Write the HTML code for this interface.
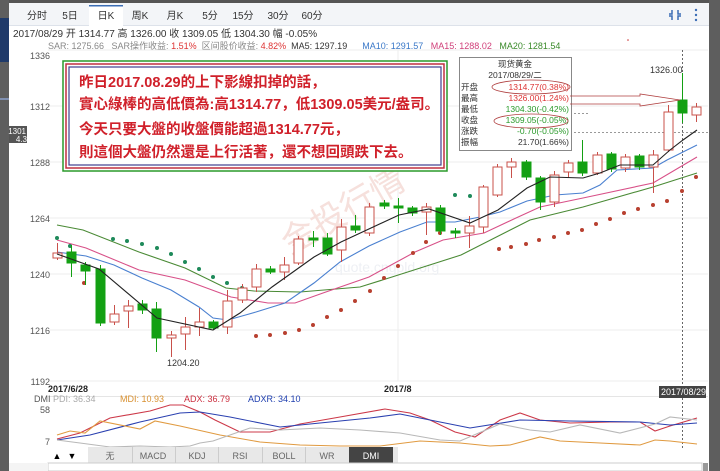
<!DOCTYPE html>
<html><head><meta charset="utf-8"><style>
html,body{margin:0;padding:0;width:720px;height:471px;overflow:hidden;background:#fff;font-family:"Liberation Sans","Noto Sans CJK SC",sans-serif}
svg{display:block}
</style></head><body>
<svg id="s" width="720" height="471" xmlns="http://www.w3.org/2000/svg" font-family="Liberation Sans, Noto Sans CJK SC, sans-serif">
<!-- dimmed background -->
<rect x="0" y="0" width="720" height="471" fill="#5e5e5e"/>
<rect x="0" y="18" width="9" height="44" fill="#1f3a6a"/>
<rect x="0" y="98" width="9" height="2" fill="#8090b0"/>
<rect x="9" y="0" width="700" height="471" fill="#fff"/>
<rect x="9" y="0" width="700" height="3" fill="#555"/>
<!-- tab bar -->
<rect x="9" y="3" width="700" height="23" fill="#f3f5f8"/>
<line x1="9" y1="25.5" x2="709" y2="25.5" stroke="#dde2ea"/>
<rect x="89" y="5" width="34" height="21" fill="#fff"/>
<rect x="89" y="5" width="34" height="1.5" fill="#3b6db5"/>
<g font-size="10" fill="#333" text-anchor="middle">
<text x="37" y="19">分时</text><text x="70" y="19">5日</text><text x="106" y="19">日K</text><text x="140" y="19">周K</text><text x="175" y="19">月K</text><text x="210" y="19">5分</text><text x="243" y="19">15分</text><text x="278" y="19">30分</text><text x="312" y="19">60分</text>
</g>
<g stroke="#3b6db5" stroke-width="1.5" fill="none"><path d="M672 10v4h-3M678 10v4h3M672 20v-4h-3M678 20v-4h3"/></g>
<g fill="#3b6db5"><circle cx="696" cy="10" r="1.2"/><circle cx="696" cy="15" r="1.2"/><circle cx="696" cy="20" r="1.2"/></g>
<text x="13" y="37" font-size="10" fill="#333">2017/08/29 开 1314.77 高 1326.00 收 1309.05 低 1304.30 幅 -0.05%</text>
<text x="48" y="49" font-size="9" fill="#888">SAR: 1275.66 &#160; SAR操作收益: <tspan fill="#d33">1.51%</tspan> &#160;区间股价收益: <tspan fill="#d33">4.82%</tspan> &#160;<tspan fill="#333">MA5: 1297.19</tspan> &#160; &#160; &#160;<tspan fill="#3a78c8">MA10: 1291.57</tspan> &#160; <tspan fill="#d0407a">MA15: 1288.02</tspan> &#160; <tspan fill="#3a8a2a">MA20: 1281.54</tspan></text>
<!-- grid -->
<g stroke="#eee"><line x1="48" y1="50" x2="708" y2="50"/><line x1="48" y1="106" x2="708" y2="106"/><line x1="48" y1="162" x2="708" y2="162"/><line x1="48" y1="218" x2="708" y2="218"/><line x1="48" y1="274" x2="708" y2="274"/><line x1="48" y1="330" x2="708" y2="330"/><line x1="48" y1="381" x2="708" y2="381"/><line x1="398" y1="50" x2="398" y2="381"/></g>
<g font-size="9" fill="#555" text-anchor="end"><text x="50" y="59">1336</text><text x="50" y="110">1312</text><text x="50" y="166">1288</text><text x="50" y="222">1264</text><text x="50" y="278">1240</text><text x="50" y="334">1216</text><text x="50" y="385">1192</text></g>
<rect x="9" y="126" width="18" height="17" fill="#555"/>
<text x="26" y="134" font-size="8" fill="#fff" text-anchor="end">1301</text><text x="27" y="142" font-size="8" fill="#fff" text-anchor="end">4.3</text>
<!-- watermark -->
<text x="290" y="255" font-size="34" fill="#f6e0dc" transform="rotate(-30 290 255)">金投行情</text>
<text x="335" y="272" font-size="14" fill="#eef0f4">quote.cngold.org</text>
<line x1="574" y1="132.5" x2="708" y2="132.5" stroke="#999" stroke-dasharray="2,2"/>
<line x1="574" y1="113.5" x2="590" y2="113.5" stroke="#999" stroke-dasharray="2,2"/>
<line x1="682.5" y1="50" x2="682.5" y2="448" stroke="#666" stroke-dasharray="2,2"/>
<circle cx="628" cy="40" r="0.8" fill="#c33"/>
<g id="chart"></g>
<text x="650" y="73" font-size="9" fill="#333">1326.00</text>
<text x="167" y="366" font-size="9" fill="#333">1204.20</text>
<!-- info box -->
<rect x="459.5" y="57.5" width="112" height="93" fill="#fff" stroke="#888"/>
<g font-size="8.5" fill="#333"><text x="515" y="67" text-anchor="middle">现货黄金</text><text x="515" y="78" text-anchor="middle">2017/08/29/二</text>
<text x="461" y="90">开盘</text><text x="461" y="101">最高</text><text x="461" y="112">最低</text><text x="461" y="123">收盘</text><text x="461" y="134">涨跌</text><text x="461" y="145">振幅</text></g>
<g font-size="8.5" text-anchor="end"><text x="569" y="90" fill="#d33">1314.77(0.38%)</text><text x="569" y="101" fill="#d33">1326.00(1.24%)</text><text x="569" y="112" fill="#2a9a2a">1304.30(-0.42%)</text><text x="569" y="123" fill="#2a9a2a">1309.05(-0.05%)</text><text x="569" y="134" fill="#2a9a2a">-0.70(-0.05%)</text><text x="569" y="145" fill="#333">21.70(1.66%)</text></g>
<ellipse cx="531" cy="87" rx="39" ry="7" fill="none" stroke="#b04040" stroke-width="0.8"/>
<ellipse cx="531" cy="121" rx="37" ry="7" fill="none" stroke="#b04040" stroke-width="0.8"/>
<path d="M570 96 L640 96 L640 94 L680 100 L640 106 L640 104 L570 104" fill="none" stroke="#b04040" stroke-width="0.8"/>
<!-- text box -->
<rect x="63" y="61" width="384" height="110" fill="#fff" stroke="#2a9a2a" stroke-width="1.5"/>
<rect x="66" y="64" width="378" height="104" fill="none" stroke="#c03040" stroke-width="1.5"/>
<rect x="69" y="67" width="372" height="98" fill="none" stroke="#404090" stroke-width="1.2"/>
<g font-size="14.5" font-weight="bold" fill="#d0202a"><text x="79" y="87">昨日2017.08.29的上下影線扣掉的話，</text><text x="79" y="109">實心綠棒的高低價為:高1314.77，低1309.05美元/盎司。</text><text x="79" y="134">今天只要大盤的收盤價能超過1314.77元，</text><text x="79" y="157">則這個大盤仍然還是上行活著，還不想回頭跌下去。</text></g>
<!-- date axis -->
<line x1="48" y1="396.5" x2="708" y2="396.5" stroke="#e5e5e5"/>
<g font-size="9" font-weight="bold" fill="#222"><text x="48" y="392">2017/6/28</text><text x="384" y="392">2017/8</text></g>
<rect x="659" y="386" width="47" height="12" fill="#444"/><text x="661" y="395" font-size="9" fill="#fff">2017/08/29</text>
<text x="34" y="402" font-size="9" fill="#555">DMI <tspan fill="#aaa">PDI: 36.34</tspan></text>
<text x="120" y="402" font-size="9" fill="#d89030">MDI: 10.93</text>
<text x="184" y="402" font-size="9" fill="#cc3040">ADX: 36.79</text>
<text x="248" y="402" font-size="9" fill="#2040b0">ADXR: 34.10</text>
<g font-size="9" fill="#555" text-anchor="end"><text x="50" y="413">58</text><text x="50" y="445">7</text></g>
<!-- bottom tabs -->
<rect x="48" y="447" width="350" height="16" fill="#e8e8e8"/>
<rect x="48" y="447" width="40" height="16" fill="#fff"/>
<g stroke="#ccc"><line x1="132.5" y1="447" x2="132.5" y2="463"/><line x1="175.5" y1="447" x2="175.5" y2="463"/><line x1="218.5" y1="447" x2="218.5" y2="463"/><line x1="262.5" y1="447" x2="262.5" y2="463"/><line x1="305.5" y1="447" x2="305.5" y2="463"/></g>
<rect x="349" y="447" width="44" height="16" fill="#444"/>
<g font-size="9" fill="#666" text-anchor="middle"><text x="57" y="459" fill="#000">▲</text><text x="72" y="459" fill="#000">▼</text><text x="110" y="459">无</text><text x="153" y="459">MACD</text><text x="197" y="459">KDJ</text><text x="240" y="459">RSI</text><text x="284" y="459">BOLL</text><text x="327" y="459">WR</text><text x="371" y="459" fill="#fff">DMI</text></g>
<rect x="48" y="463" width="654" height="8" fill="#fff" stroke="#ccc"/>
<rect x="9" y="463" width="39" height="8" fill="#f4f4f4"/>
<rect x="703" y="463" width="5" height="8" fill="#999"/>
</svg>
<script>
var g=document.getElementById('chart'),h='';
function pl(pts,c,w){h+='<polyline fill="none" stroke="'+c+'" stroke-width="'+(w||1.1)+'" points="'+pts+'"/>';}
pl("57,225 83,230 139,252 185,268 226,288 254,291 300,292 360,287 392,277 461,255 530,220 583,207 653,187 697,173","#4a8a35");
pl("57,240 86,248 139,270 185,280 231,297 268,303 295,303 323,293 369,277 415,252 443,240 484,233 516,218 540,207 583,198 653,183 697,157","#d85088");
pl("57,252 86,256 114,265 142,278 171,290 199,307 213,318 228,320 256,312 285,303 314,283 340,262 369,246 400,232 427,222 455,222 480,217 500,212 527,201 555,195 583,193 600,185 617,170 653,168 667,160 697,145","#4a80d0");
var dg=[[57,238],[70,246],[113,239],[127,241],[142,244],[157,248],[171,254],[185,262],[199,269],[213,277],[227,283],[242,288],[455,195],[470,196],[484,197]];
var dr=[[84,283],[99,282],[256,336],[270,335],[285,333],[299,330],[313,325],[327,317],[341,310],[355,301],[370,291],[384,278],[398,266],[413,253],[426,242],[440,233],[499,249],[511,247],[526,244],[539,240],[554,237],[568,233],[582,230],[596,224],[610,219],[624,213],[638,209],[653,205],[667,201],[682,191],[696,177]];
dg.forEach(function(p){h+='<circle cx="'+p[0]+'" cy="'+p[1]+'" r="2" fill="#1e8a5a"/>';});
dr.forEach(function(p){h+='<circle cx="'+p[0]+'" cy="'+p[1]+'" r="2" fill="#b84030"/>';});
var c=[[253,258,243,260,'r'],[252,263,245,277,'g'],[265,271,262,285,'g'],[269,323,265,326,'g'],[314,322,305,325,'r'],[306,311,300,328,'r'],[304,310,300,314,'g'],[309,338,302,352,'g'],[335,338,331,357,'r'],[327,334,317,350,'r'],[322,327,308,336,'r'],[322,328,320,330,'g'],[301,327,290,334,'r'],[288,300,284,303,'r'],[269,287,264,292,'r'],[269,272,266,274,'g'],[265,272,257,280,'r'],[239,263,236,265,'r'],[238,240,231,247,'g'],[238,254,233,256,'g'],[227,250,219,262,'r'],[226,230,215,233,'g'],[207,233,203,236,'r'],[203,206,200,209,'g'],[206,208,198,223,'g'],[208,213,206,216,'g'],[207,212,203,235,'r'],[208,231,205,235,'g'],[231,233,228,238,'g'],[226,233,216,248,'r'],[187,227,185,233,'r'],[167,195,164,197,'r'],[162,167,158,178,'r'],[162,177,160,180,'g'],[178,202,176,210,'g'],[175,202,171,207,'r'],[163,172,160,178,'r'],[162,173,140,176,'g'],[155,173,152,175,'r'],[154,169,152,172,'g'],[157,168,154,172,'r'],[156,167,154,170,'g'],[155,167,150,193,'r'],[112,150,105,152,'r'],[100,113,73,123,'g'],[107,115,103,122,'r']];
c.forEach(function(d,i){var x=Math.round(57+i*14.2)+0.5,col=d[4]=='g'?'#13a013':'#c8504a';
h+='<line x1="'+x+'" y1="'+d[2]+'" x2="'+x+'" y2="'+d[3]+'" stroke="'+col+'"/>';
h+='<rect x="'+(x-4.5)+'" y="'+d[0]+'" width="9" height="'+Math.max(1,d[1]-d[0])+'" fill="'+(d[4]=='g'?col:'#fff')+'" stroke="'+col+'"/>';});
pl("57,254 99,269 157,318 213,330 240,313 272,287 314,257 341,242 399,215 429,209 470,223 498,210 527,188 550,177 583,178 600,173 620,165 653,165 670,150 683,140 697,130","#222");
pl("57,439 80,433 110,418 150,411 170,405 183,405 200,412 215,420 240,432 270,432 300,424 340,417 385,409 410,413 430,420 455,432 475,437 500,420 520,413 540,420 570,423 610,422 640,422 655,431 670,426 697,418","#cc3848");
pl("57,440 90,435 140,422 180,413 200,412 230,417 280,427 320,423 370,418 400,414 440,422 470,428 520,420 570,421 640,422 670,425 697,423","#2a40b0");
pl("57,435 70,431 85,433 100,421 140,429 155,421 180,426 220,435 260,442 300,445 340,446 380,446 420,441 460,443 490,446 510,445 540,437 560,441 600,443 640,445 655,440 670,441 697,444","#e09a40");
pl("57,440 80,443 110,447 140,446 170,447 190,446 200,443 213,441 230,435 250,428 280,430 320,428 360,430 400,433 440,440 460,441 500,424 530,430 550,432 580,425 620,433 655,424 670,417 697,420","#b8b8b8");
g.innerHTML=h;
</script>
</body></html>
